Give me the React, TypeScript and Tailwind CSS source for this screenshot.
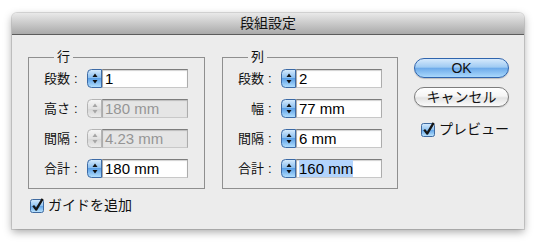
const FONT = "font-['Liberation_Sans','Noto_Sans_CJK_JP',sans-serif]";

function Stepper({ disabled }: { disabled?: boolean }) {
  const id = disabled ? "stepG" : "stepB";
  return (
    <svg width="15" height="19" viewBox="0 0 15 19" className="shrink-0 block">
      <defs>
        {disabled ? (
          <linearGradient id={id} x1="0" y1="0" x2="0" y2="1">
            <stop offset="0" stopColor="#f6f6f6" />
            <stop offset="0.5" stopColor="#e2e2e2" />
            <stop offset="0.51" stopColor="#d6d6d6" />
            <stop offset="1" stopColor="#ececec" />
          </linearGradient>
        ) : (
          <linearGradient id={id} x1="0" y1="0" x2="0" y2="1">
            <stop offset="0" stopColor="#d8ecfd" />
            <stop offset="0.45" stopColor="#8cc0f0" />
            <stop offset="0.5" stopColor="#5a9fe6" />
            <stop offset="1" stopColor="#b6e2ff" />
          </linearGradient>
        )}
      </defs>
      <path
        d="M14.5 0.5 H4.5 Q0.5 0.5 0.5 4.5 V14.5 Q0.5 18.5 4.5 18.5 H14.5 Z"
        fill={`url(#${id})`}
        stroke={disabled ? "#b4b4b4" : "#3c6aa5"}
      />
      <path d="M8 4.5 L10.5 8 H5.5 Z" fill={disabled ? "#a6a6a6" : "#111"} />
      <path d="M8 14.5 L10.5 11 H5.5 Z" fill={disabled ? "#a6a6a6" : "#111"} />
    </svg>
  );
}

function Field({
  label,
  value,
  disabled,
  selected,
}: {
  label: string;
  value: string;
  disabled?: boolean;
  selected?: boolean;
}) {
  return (
    <div className="flex items-center h-[19px]">
      <span className="w-[26px] text-right text-[13px] leading-[19px] text-[#111] whitespace-nowrap">{label}</span>
      <span className="w-[17px] pl-[4px] text-[13px] leading-[19px] text-[#111]">:</span>
      <Stepper disabled={disabled} />
      <div
        className={`w-[86px] h-[19px] border border-t-[#7d7d7d] border-x-[#acacac] border-b-[#c8c8c8] shadow-[inset_0_1px_1px_rgba(0,0,0,0.18)] pl-[2px] flex items-center text-[15px] leading-[17px] ${
          disabled ? "bg-[#e5e5e5] text-[#959595]" : "bg-white text-black"
        }`}
      >
        <span className={selected ? "bg-[#b3d4fc]" : ""}>{value}</span>
      </div>
    </div>
  );
}

function CheckBox() {
  return (
    <svg width="15" height="15" viewBox="0 0 15 15" className="shrink-0 block">
      <defs>
        <linearGradient id="chkG" x1="0" y1="0" x2="0" y2="1">
          <stop offset="0" stopColor="#d6ebfd" />
          <stop offset="0.5" stopColor="#8ec2f1" />
          <stop offset="0.52" stopColor="#62a5e8" />
          <stop offset="1" stopColor="#bfe6ff" />
        </linearGradient>
      </defs>
      <rect x="0.5" y="1.5" width="13" height="13" rx="2" fill="url(#chkG)" stroke="#3f6a9f" />
      <path d="M3.2 7.6 L6.2 11.6 L12.6 0.8" fill="none" stroke="#151515" strokeWidth="2.3" strokeLinejoin="round" />
    </svg>
  );
}

function Group({
  title,
  width,
  children,
}: {
  title: string;
  width: string;
  children: React.ReactNode;
}) {
  return (
    <fieldset className={`${width} border border-[#8f8f8f] pl-[15px] pt-[4px] pb-[10px]`}>
      <legend className="ml-[10px] px-[3px] text-[13px] leading-[16px] text-[#111]">{title}</legend>
      <div className="flex flex-col gap-[11px]">{children}</div>
    </fieldset>
  );
}

export default function App() {
  return (
    <div className={`w-[537px] h-[242px] bg-white pt-[13px] pl-[12px] ${FONT}`}>
      <div className="w-[512px] h-[216px] bg-[#ececec] rounded-t-[5px] shadow-[0_3px_9px_rgba(0,0,0,0.35),0_0_0_1px_rgba(0,0,0,0.12)] flex flex-col">
        <div className="h-[22px] rounded-t-[5px] border-b border-[#5c5c5c] bg-[linear-gradient(to_bottom,#e9e9e9,#aaaaaa)] flex items-center justify-center text-[14px] text-[#111]">
          段組設定
        </div>

        <div className="flex pl-[16px] pt-[14px]">
          <Group title="行" width="w-[177px]">
            <Field label="段数" value="1" />
            <Field label="高さ" value="180 mm" disabled />
            <Field label="間隔" value="4.23 mm" disabled />
            <Field label="合計" value="180 mm" />
          </Group>

          <div className="w-[17px]" />

          <Group title="列" width="w-[176px]">
            <Field label="段数" value="2" />
            <Field label="幅" value="77 mm" />
            <Field label="間隔" value="6 mm" />
            <Field label="合計" value="160 mm" selected />
          </Group>

          <div className="ml-[16px] pt-[9px] flex flex-col">
            <button className="w-[95px] h-[20px] rounded-full border border-[#2f64ad] bg-[linear-gradient(to_bottom,#d5e9fc_0%,#a0cbf3_45%,#6eabea_52%,#a9d8fc_100%)] text-[14px] leading-[18px] font-medium text-[#111] shadow-[0_1px_1px_rgba(0,0,0,0.2)]">
              OK
            </button>
            <button className="mt-[9px] w-[95px] h-[20px] rounded-full border border-[#7d7d7d] bg-[linear-gradient(to_bottom,#ffffff_0%,#f5f5f5_45%,#e3e3e3_55%,#fbfbfb_100%)] text-[14px] leading-[18px] text-[#111] shadow-[0_1px_1px_rgba(0,0,0,0.15)]">
              キャンセル
            </button>
            <div className="mt-[15px] ml-[7px] flex items-center gap-[3px]">
              <CheckBox />
              <span className="text-[14px] leading-[15px] text-[#111]">プレビュー</span>
            </div>
          </div>
        </div>

        <div className="mt-[9px] ml-[18px] flex items-center gap-[3px]">
          <CheckBox />
          <span className="text-[14px] leading-[15px] text-[#111]">ガイドを追加</span>
        </div>
      </div>
    </div>
  );
}
